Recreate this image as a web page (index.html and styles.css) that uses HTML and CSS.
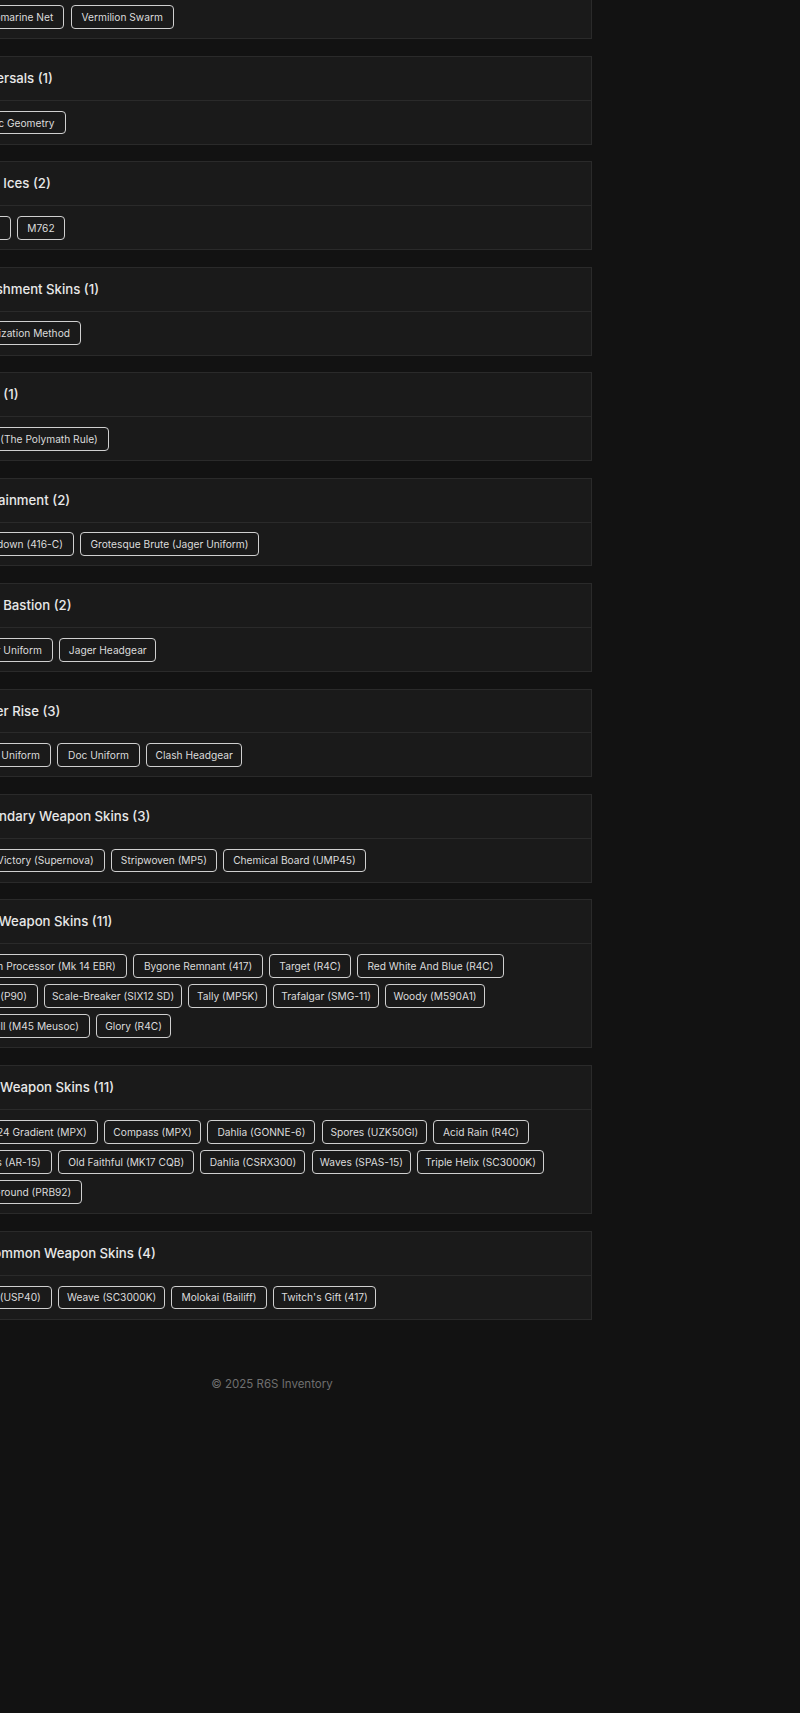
FILE: index.html
```html
<!DOCTYPE html>
<html lang="en">
<head>
<meta charset="utf-8">
<title>R6S Inventory</title>
<link rel="stylesheet" href="styles.css">
</head>
<body>
<main class="page">
  <section class="card"><h2 class="head">Marine Skins (2)</h2><div class="body"><span class="pill lead w96">Submarine Net</span><span class="pill w103">Vermilion Swarm</span></div></section>
  <section class="card"><h2 class="head">Universals (1)</h2><div class="body"><span class="pill lead w98">Epic Geometry</span></div></section>
  <section class="card"><h2 class="head">Frost Ices (2)</h2><div class="body"><span class="pill lead w43">AK</span><span class="pill w48">M762</span></div></section>
  <section class="card"><h2 class="head">Punishment Skins (1)</h2><div class="body"><span class="pill lead w113">Organization Method</span></div></section>
  <section class="card"><h2 class="head">Meta (1)</h2><div class="body"><span class="pill lead w141">Mira (The Polymath Rule)</span></div></section>
  <section class="card"><h2 class="head">Containment (2)</h2><div class="body"><span class="pill lead w106">Lockdown (416-C)</span><span class="pill w178">Grotesque Brute (Jager Uniform)</span></div></section>
  <section class="card"><h2 class="head">Steel Bastion (2)</h2><div class="body"><span class="pill lead w85">Jager Uniform</span><span class="pill w97">Jager Headgear</span></div></section>
  <section class="card"><h2 class="head">Ember Rise (3)</h2><div class="body"><span class="pill lead w83">Clash Uniform</span><span class="pill w82">Doc Uniform</span><span class="pill w96b">Clash Headgear</span></div></section>
  <section class="card"><h2 class="head">Legendary Weapon Skins (3)</h2><div class="body"><span class="pill lead w137">Victory (Supernova)</span><span class="pill w106b">Stripwoven (MP5)</span><span class="pill w142">Chemical Board (UMP45)</span></div></section>
  <section class="card"><h2 class="head">Epic Weapon Skins (11)</h2><div class="body"><span class="pill lead w159">Quantum Processor (Mk 14 EBR)</span><span class="pill w130">Bygone Remnant (417)</span><span class="pill w82b">Target (R4C)</span><span class="pill w146">Red White And Blue (R4C)</span><span class="pill lead w70">Glitch (P90)</span><span class="pill w138">Scale-Breaker (SIX12 SD)</span><span class="pill w79">Tally (MP5K)</span><span class="pill w106b">Trafalgar (SMG-11)</span><span class="pill w99">Woody (M590A1)</span><span class="pill lead w122">Quill (M45 Meusoc)</span><span class="pill w74">Glory (R4C)</span></div></section>
  <section class="card"><h2 class="head">Rare Weapon Skins (11)</h2><div class="body"><span class="pill lead w130b">2024 Gradient (MPX)</span><span class="pill w97">Compass (MPX)</span><span class="pill w108">Dahlia (GONNE-6)</span><span class="pill w105">Spores (UZK50GI)</span><span class="pill w95">Acid Rain (R4C)</span><span class="pill lead w84">Waves (AR-15)</span><span class="pill w136">Old Faithful (MK17 CQB)</span><span class="pill w105">Dahlia (CSRX300)</span><span class="pill w99">Waves (SPAS-15)</span><span class="pill w126">Triple Helix (SC3000K)</span><span class="pill lead w114">Ground (PRB92)</span></div></section>
  <section class="card"><h2 class="head">Uncommon Weapon Skins (4)</h2><div class="body"><span class="pill lead w84">Coil (USP40)</span><span class="pill w107">Weave (SC3000K)</span><span class="pill w95">Molokai (Bailiff)</span><span class="pill w103">Twitch's Gift (417)</span></div></section>
  <footer class="foot">© 2025 R6S Inventory</footer>
</main>
</body>
</html>
```

FILE: styles.css
```css
html, body { margin: 0; padding: 0; background: #121212; overflow: hidden; height: 100%; }
body { font-family: Inter, "Liberation Sans", sans-serif; color: #e0e0e0; }
.page { width: 640px; margin: -49.4px 0 0 -48px; }
.card { background: #1a1a1a; border: 1px solid #2a2a2a; margin-bottom: 16.75px; }
.head { margin: 0; padding: 0 15px; height: 42.9px; line-height: 42.9px; font-size: 13.2px; font-weight: 500; color: #e8e8e8; border-bottom: 1px solid #2a2a2a; white-space: nowrap; }
.body { display: flex; flex-wrap: wrap; gap: 6.4px; padding: 9.7px 15px 9.3px; }
.pill { box-sizing: border-box; display: flex; align-items: center; justify-content: center; flex: none; height: 23.8px; border: 1px solid #d0d0d0; border-radius: 4px; font-size: 10.2px; color: #dcdcdc; white-space: nowrap; }
.lead { justify-content: flex-end; padding-right: 10px; }
.foot { text-align: center; margin-top: 57.4px; font-size: 11.5px; color: #6f6f6f; }

.w43 { width: 42.8px; }
.w48 { width: 47.5px; }
.w70 { width: 70px; }
.w74 { width: 74.3px; }
.w79 { width: 78.5px; }
.w82 { width: 82.4px; }
.w82b { width: 81.6px; }
.w83 { width: 82.9px; }
.w84 { width: 83.8px; }
.w85 { width: 84.9px; }
.w95 { width: 95.3px; }
.w96 { width: 96.3px; }
.w96b { width: 96.4px; }
.w97 { width: 97px; }
.w98 { width: 97.5px; }
.w99 { width: 99.1px; }
.w103 { width: 103px; }
.w105 { width: 105px; }
.w106 { width: 105.9px; }
.w106b { width: 105.9px; }
.w107 { width: 106.8px; }
.w108 { width: 108.1px; }
.w113 { width: 113px; }
.w114 { width: 114.3px; }
.w122 { width: 122px; }
.w126 { width: 126.4px; }
.w130 { width: 129.8px; }
.w130b { width: 129.6px; }
.w136 { width: 135.9px; }
.w137 { width: 136.6px; }
.w138 { width: 137.5px; }
.w141 { width: 140.7px; }
.w142 { width: 142.4px; }
.w146 { width: 146.2px; }
.w159 { width: 158.8px; }
.w178 { width: 178.4px; }
```
